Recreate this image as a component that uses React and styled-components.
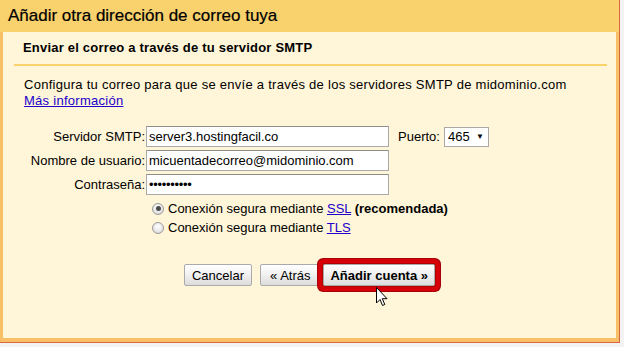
import React from "react";
import styled, { createGlobalStyle } from "styled-components";

const Global = createGlobalStyle`
  html, body { margin: 0; padding: 0; background: #f3f3f3; }
  body { font-family: "Liberation Sans", Arial, sans-serif; }
`;

const Frame = styled.div`
  width: 620px;
  height: 343px;
  border-right: 1px solid #d9673f;
  border-bottom: 1px solid #d9673f;
  background: #f8bf66;
  padding: 0 3px 4px 3px;
  box-sizing: border-box;
  display: flex;
  flex-direction: column;
  position: relative;
`;

const Header = styled.div`
  height: 32px;
  margin: 0 -3px 0 -3px;
  padding: 0 0 0 8px;
  background: #f9d16d;
  display: flex;
  align-items: center;
  font-size: 17px;
  color: #000;
  -webkit-text-stroke: 0.2px #000;
`;

const Panel = styled.div`
  flex: 1;
  background: #fff5d8;
  display: flex;
  flex-direction: column;
`;

const SubHead = styled.div`
  margin: 0 9px 0 11px;
  padding: 8px 0 8px 9px;
  border-bottom: 2px solid #f9d16d;
  font-size: 13px;
  line-height: 16px;
  font-weight: bold;
  letter-spacing: 0.2px;
`;

const Body = styled.div`
  padding: 11px 0 0 21px;
  font-size: 13px;
  line-height: 16px;
`;

const Para = styled.p`
  margin: 0;
  letter-spacing: 0.27px;
`;

const Link = styled.a`
  color: #2200cc;
  text-decoration: underline;
`;

const Form = styled.div`
  margin-top: 17px;
  display: flex;
  flex-direction: column;
  gap: 3px;
`;

const Row = styled.div`
  display: flex;
  align-items: center;
  height: 21px;
`;

const Label = styled.label`
  width: 121px;
  padding-right: 1px;
  text-align: right;
  white-space: nowrap;
`;

const Input = styled.div`
  width: 243px;
  height: 21px;
  box-sizing: border-box;
  background: #fff;
  border: 1px solid #a9a9a9;
  border-top-color: #8e8e8e;
  padding: 0 2px;
  display: flex;
  align-items: center;
  font-size: 13px;
`;

const Dots = styled.span`
  font-size: 13px;
  letter-spacing: -0.3px;
  color: #000;
`;

const PortLabel = styled.span`
  margin-left: 9px;
`;

const Select = styled.div`
  margin-left: 4px;
  width: 45px;
  height: 20px;
  box-sizing: border-box;
  background: #fff;
  border: 1px solid #a9a9a9;
  padding: 0 4px 0 3px;
  display: flex;
  align-items: center;
  justify-content: space-between;
`;

const Arrow = styled.span`
  font-size: 8px;
`;

const Radios = styled.div`
  margin: 4px 0 0 128px;
  display: flex;
  flex-direction: column;
`;

const RadioRow = styled.div`
  height: 19px;
  display: flex;
  align-items: center;
  gap: 4px;
`;

const Radio = styled.span`
  width: 12px;
  height: 12px;
  border-radius: 50%;
  box-sizing: border-box;
  border: 1px solid #9a9a9a;
  background: radial-gradient(circle at 50% 35%, #ffffff 0%, #e6e6e6 60%, #cfcfcf 100%);
  display: flex;
  align-items: center;
  justify-content: center;
  &::after {
    content: "";
    width: 5px;
    height: 5px;
    border-radius: 50%;
    background: ${(p) => (p.$checked ? "#4a4a4a" : "transparent")};
  }
`;

const Buttons = styled.div`
  margin-top: 27px;
  display: flex;
  justify-content: center;
  align-items: center;
  font-size: 13px;
`;

const Button = styled.button`
  position: relative;
  z-index: ${(p) => (p.$focus ? 1 : 0)};
  height: 22px;
  margin-left: ${(p) => p.$gap || 0}px;
  padding: 0 ${(p) => p.$pad || 7}px;
  font-family: "Liberation Sans", Arial, sans-serif;
  font-size: 13px;
  font-weight: ${(p) => (p.$focus ? "bold" : "normal")};
  color: #000;
  background: linear-gradient(#ffffff, #f0f0f0 50%, #dcdcdc);
  border: 1px solid #aaaaaa;
  border-radius: 2px;
  box-shadow: ${(p) =>
    p.$focus ? "0 0 0 1px #b00000, 0 0 0 5px #d6000a, 0 0 0 6px #a80008" : "none"};
`;

const Cursor = styled.svg`
  position: absolute;
  left: 376px;
  top: 287px;
  z-index: 2;
`;

export default function App() {
  return (
    <>
      <Global />
      <Frame>
        <Header>Añadir otra dirección de correo tuya</Header>
        <Panel>
          <SubHead>Enviar el correo a través de tu servidor SMTP</SubHead>
          <Body>
            <Para>
              Configura tu correo para que se envíe a través de los servidores SMTP de midominio.com
              <br />
              <Link href="#">Más información</Link>
            </Para>
            <Form>
              <Row>
                <Label>Servidor SMTP:</Label>
                <Input>server3.hostingfacil.co</Input>
                <PortLabel>Puerto:</PortLabel>
                <Select>
                  <span>465</span>
                  <Arrow>▼</Arrow>
                </Select>
              </Row>
              <Row>
                <Label>Nombre de usuario:</Label>
                <Input>micuentadecorreo@midominio.com</Input>
              </Row>
              <Row>
                <Label>Contraseña:</Label>
                <Input>
                  <Dots>••••••••••</Dots>
                </Input>
              </Row>
            </Form>
            <Radios>
              <RadioRow>
                <Radio $checked />
                <span>
                  Conexión segura mediante <Link href="#">SSL</Link> <b>(recomendada)</b>
                </span>
              </RadioRow>
              <RadioRow>
                <Radio />
                <span>
                  Conexión segura mediante <Link href="#">TLS</Link>
                </span>
              </RadioRow>
            </Radios>
          </Body>
          <Buttons>
            <Button>Cancelar</Button>
            <Button $gap={8} $pad={9}>« Atrás</Button>
            <Button $gap={3} $pad={6} $focus>
              Añadir cuenta »
            </Button>
          </Buttons>
        </Panel>
        <Cursor width="13" height="20" viewBox="0 0 13 20">
          <path
            d="M0.5 0.5 L0.5 16 L4 12.5 L6.5 18.5 L8.8 17.5 L6.3 11.7 L11 11.7 Z"
            fill="#fff"
            stroke="#000"
            strokeWidth="1"
            strokeLinejoin="miter"
          />
        </Cursor>
      </Frame>
    </>
  );
}
